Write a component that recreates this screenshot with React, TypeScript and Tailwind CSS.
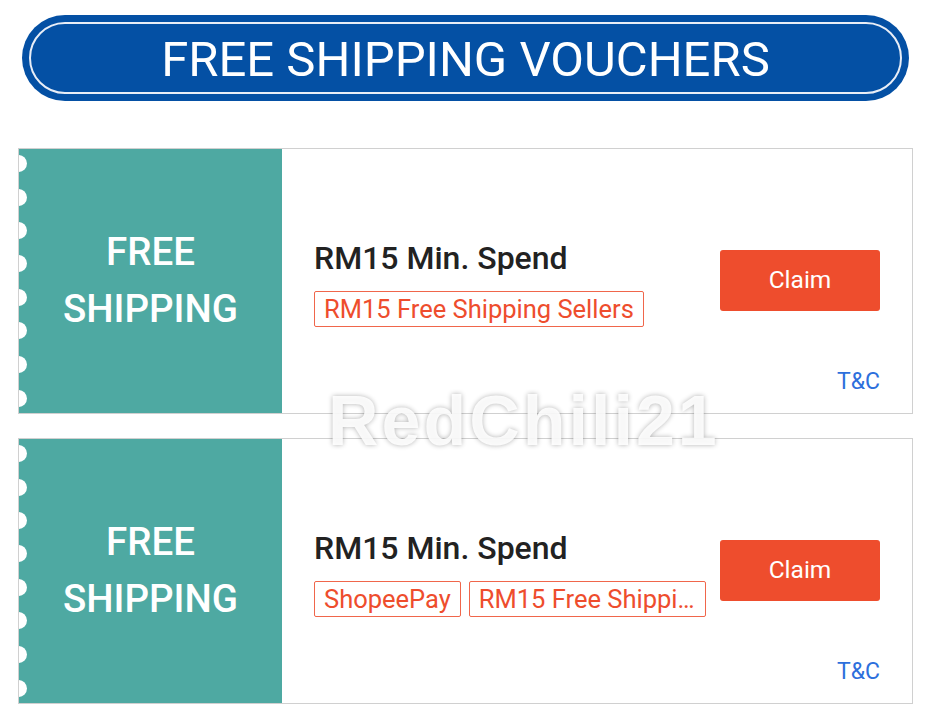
const vouchers = [
  { tags: ["RM15 Free Shipping Sellers"] },
  { tags: ["ShopeePay", "RM15 Free Shipping Sellers"] },
];

// scallop holes down the left edge of each ticket
const holes = [14, 48, 81, 114, 148, 181, 215, 249];

function Voucher({ tags }: { tags: string[] }) {
  return (
    <div className="relative flex h-[266px] w-[895px] border border-[#d0d0d0] bg-white">
      <div className="relative flex w-[263px] shrink-0 flex-col items-center justify-center overflow-hidden bg-[#4ea9a2] pb-[2px] text-[38.5px] font-medium leading-[57px] text-white">
        <span>FREE</span>
        <span>SHIPPING</span>
        {holes.map((y) => (
          <span
            key={y}
            className="absolute left-[-9px] h-[17px] w-[17px] rounded-full bg-white"
            style={{ top: y - 8.5 }}
          />
        ))}
      </div>
      <div className="flex min-w-0 flex-1 pl-[32px] pr-[32px]">
        <div className="flex min-w-0 flex-1 flex-col justify-center pt-[4px]">
          <div className="text-[32px] font-medium leading-[36px] text-[#222]">RM15 Min. Spend</div>
          <div className="mt-[15px] flex gap-[8px]">
            {tags.map((t, i) => (
              <span
                key={t}
                className={`truncate rounded-[2px] border border-[#f0664b] px-[9px] text-[25.5px] leading-[34px] text-[#ee4d2d] ${
                  tags.length > 1 && i === tags.length - 1 ? "max-w-[237px]" : ""
                }`}
              >
                {t}
              </span>
            ))}
          </div>
        </div>
        <div className="flex w-[160px] shrink-0 flex-col items-end pt-[101px] pb-[18px]">
          <button className="h-[61px] w-[160px] rounded-[3px] bg-[#ee4d2d] text-[24.5px] text-white">Claim</button>
          <span className="mt-auto text-[23px] leading-[26px] text-[#2d6fdc]">T&amp;C</span>
        </div>
      </div>
    </div>
  );
}

export default function App() {
  return (
    <div className="relative min-h-[720px] w-[929px] bg-white font-['Roboto',sans-serif]">
      <div className="pl-[22px] pt-[15px]">
        <div className="flex h-[86px] w-[887px] rounded-full bg-[#0450a4] p-[7px]">
          <div className="flex flex-1 items-center justify-center rounded-full border-2 border-[#e9eef7] pt-[3px] text-[49px] leading-none text-white">
            FREE SHIPPING VOUCHERS
          </div>
        </div>
      </div>
      <div className="mt-[47px] flex flex-col gap-[24px] pl-[18px]">
        {vouchers.map((v, i) => (
          <Voucher key={i} tags={v.tags} />
        ))}
      </div>
      {/* watermark */}
      <div className="pointer-events-none absolute left-[328px] top-[386px] font-['Liberation_Sans',sans-serif] text-[70px] font-bold leading-none tracking-[3px] text-white/90 [text-shadow:0_0_5px_rgba(0,0,0,0.3)]">
        RedChili21
      </div>
    </div>
  );
}
